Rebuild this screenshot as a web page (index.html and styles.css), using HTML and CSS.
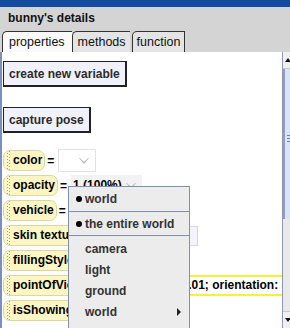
FILE: index.html
```html
<!DOCTYPE html>
<html lang="en">
<head>
  <meta charset="UTF-8">
  <title>bunny's details</title>
  <link rel="stylesheet" href="styles.css">
</head>
<body>
  <div class="window">
    <div class="titlebar"></div>
    <div class="header">bunny's details</div>

    <div class="tabs">
      <div class="tab active">properties</div>
      <div class="tab">methods</div>
      <div class="tab last">function</div>
    </div>

    <div class="pane">
      <div class="list">
        <button class="btn">create new variable</button>
        <button class="btn second">capture pose</button>

        <div class="prop-row">
          <span class="tile">color</span><span class="eq">=</span>
          <span class="drop plain w-color"><span class="tri"></span></span>
        </div>
        <div class="prop-row">
          <span class="tile">opacity</span><span class="eq">=</span>
          <span class="drop grey"><b>1 (100%)</b><span class="tri"></span></span>
        </div>
        <div class="prop-row">
          <span class="tile">vehicle</span><span class="eq">=</span>
          <span class="drop grey"><b>world</b><span class="tri"></span></span>
        </div>
        <div class="prop-row">
          <span class="tile">skin texture</span><span class="eq">=</span>
          <span class="drop lav w-skin"><b>bunny.skin</b></span>
        </div>
        <div class="prop-row">
          <span class="tile">fillingStyle</span><span class="eq">=</span>
          <span class="drop grey"><b>solid</b><span class="tri"></span></span>
        </div>
        <div class="prop-row">
          <span class="tile">pointOfView</span><span class="eq">=</span>
          <span class="pov">position: 0, 0, 0.01; orientation: (0, 0, 1)</span>
        </div>
        <div class="prop-row">
          <span class="tile">isShowing</span><span class="eq">=</span>
          <span class="drop grey"><b>true</b><span class="tri"></span></span>
        </div>
      </div>

      <div class="scrollbar">
        <div class="sb-btn up"></div>
        <div class="sb-thumb"><span class="grip"></span></div>
        <div class="sb-track"></div>
        <div class="sb-btn down"></div>
      </div>
    </div>

    <!-- popup menu for the vehicle value -->
    <div class="menu">
      <div class="item sep"><span class="dot"></span>world</div>
      <div class="item sep"><span class="dot"></span>the entire world</div>
      <div class="item small">camera</div>
      <div class="item small">light</div>
      <div class="item small">ground</div>
      <div class="item small sub">world<span class="more"></span></div>
    </div>
  </div>
</body>
</html>
```

FILE: styles.css
```css
html, body {
  margin: 0;
  overflow: hidden;
}
body {
  font-family: "Liberation Sans", Arial, sans-serif;
  background: #d4d4d4;
  width: 290px;
  height: 328px;
}
.window {
  position: relative;
  width: 299px;
  height: 328px;
  display: flex;
  flex-direction: column;
  background: #d4d4d4;
}
.titlebar {
  height: 7px;
  background: #114d9c;
}
.header {
  height: 24px;
  padding-left: 8px;
  font-size: 12px;
  font-weight: bold;
  line-height: 23px;
  color: #111;
}
.tabs {
  display: flex;
  align-items: flex-end;
  height: 21px;
  padding-left: 2px;
}
.tab {
  height: 20px;
  line-height: 20px;
  font-size: 12.5px;
  color: #111;
  padding: 0 4px 0 5px;
  background: #e4e4e4;
  border-left: 1px solid #333;
  border-top: 1px solid #333;
  border-top-left-radius: 5px;
}
.tab.active {
  background: #fafafa;
  padding: 0 7px 0 6px;
}
.tab.last {
  margin-left: 2px;
  padding: 0 4px 0 4px;
  border-right: 1px solid #333;
}
.pane {
  flex: 1;
  display: flex;
  background: #fff;
  border-left: 2px solid #7d8fb6;
  overflow: hidden;
}
.list {
  width: 280px;
  padding: 9px 0 0 1px;
  border-right: 1px solid #8f9ab2;
  overflow: hidden;
}
.btn {
  display: block;
  height: 26px;
  padding: 0 5px;
  font-family: "Liberation Sans", Arial, sans-serif;
  font-size: 12px;
  font-weight: bold;
  color: #2b2b2b;
  background: #f1f1fb;
  border: 1px solid #222;
  border-right-width: 2px;
  border-bottom-width: 2px;
  border-radius: 0;
}
.btn.second {
  margin-top: 20px;
  margin-bottom: 17px;
}
.prop-row {
  display: flex;
  align-items: center;
  height: 21px;
  margin-bottom: 4px;
  white-space: nowrap;
  font-size: 12px;
}
.tile {
  height: 19px;
  line-height: 19px;
  padding: 0 2px 0 9px;
  font-weight: bold;
  color: #000;
  background:
    radial-gradient(circle, #a8a070 0.6px, transparent 0.9px) 2px 1px / 3px 3px repeat-y,
    radial-gradient(circle, #a8a070 0.6px, transparent 0.9px) 4px 2px / 3px 3px repeat-y,
    #fbf6c4;
  border: 1px solid #ddd6a4;
  border-radius: 7px;
}
.eq {
  margin: 0 4px 0 2px;
  font-weight: bold;
}
.drop {
  position: relative;
  height: 21px;
  line-height: 21px;
  padding: 0 20px 0 2px;
  color: #000;
}
.drop.plain {
  background: #fff;
  border: 1px solid #e2e2e2;
  height: 21px;
  padding-right: 22px;
}
.w-color {
  width: 12px;
}
.drop.grey {
  background: #f2f2f2;
}
.drop.lav {
  box-sizing: border-box;
  width: 102px;
  background: #f3f3fc;
  border: 1px solid #d6d6e4;
  height: 20px;
  line-height: 18px;
}
.tri {
  position: absolute;
  right: 6px;
  top: 8px;
  width: 0;
  height: 0;
  border-left: 5px solid transparent;
  border-right: 5px solid transparent;
  border-top: 6px solid #b8b8b8;
}
.tri::after {
  content: "";
  position: absolute;
  left: -4px;
  top: -6px;
  border-left: 4px solid transparent;
  border-right: 4px solid transparent;
  border-top: 4px solid #fff;
}
.drop.grey .tri::after {
  border-top-color: #f2f2f2;
}
.pov {
  height: 17px;
  line-height: 17px;
  font-weight: bold;
  color: #000;
  border-top: 2px solid #f5f03a;
  border-bottom: 2px solid #f5f03a;
  padding-left: 2px;
}
.scrollbar {
  width: 16px;
  display: flex;
  flex-direction: column;
  background: #e9e9e9;
}
.sb-btn {
  position: relative;
  height: 16px;
  background: #f0f0f0;
  border-bottom: 1px solid #c8c8c8;
}
.sb-btn.up::after,
.sb-btn.down::after {
  content: "";
  position: absolute;
  left: 2px;
  top: 6px;
  border-left: 3px solid transparent;
  border-right: 3px solid transparent;
  border-bottom: 4px solid #111;
}
.sb-btn.down {
  border-top: 1px solid #c8c8c8;
  border-bottom: none;
}
.sb-btn.down::after {
  border-bottom: none;
  border-top: 4px solid #111;
}
.sb-thumb {
  position: relative;
  height: 150px;
  background: #dae4f8;
  border-left: 2px solid #8e9fc4;
}
.grip {
  position: absolute;
  left: 2px;
  top: 66px;
  width: 6px;
  height: 5px;
  border-top: 1px solid #6f80a8;
  border-bottom: 1px solid #6f80a8;
}
.grip::after {
  content: "";
  position: absolute;
  left: 0;
  top: 2px;
  width: 6px;
  border-top: 1px solid #6f80a8;
}
.sb-track {
  flex: 1;
}
.menu {
  position: absolute;
  left: 68px;
  top: 186px;
  width: 120px;
  height: 150px;
  background: #ececec;
  border: 1px solid #8290ad;
  font-size: 12px;
  font-weight: bold;
  color: #333;
}
.item {
  position: relative;
  display: flex;
  align-items: center;
  height: 24px;
  padding-left: 16px;
}
.item.sep {
  border-bottom: 1px solid #8290ad;
  padding-left: 7px;
}
.item.sep:nth-child(2) {
  height: 23px;
  margin-bottom: 2px;
}
.item.small {
  height: 21px;
}
.dot {
  width: 6px;
  height: 6px;
  margin-right: 3px;
  border-radius: 50%;
  background: #000;
}
.more {
  position: absolute;
  left: 108px;
  top: 7px;
  border-top: 4px solid transparent;
  border-bottom: 4px solid transparent;
  border-left: 4px solid #222;
}
```
